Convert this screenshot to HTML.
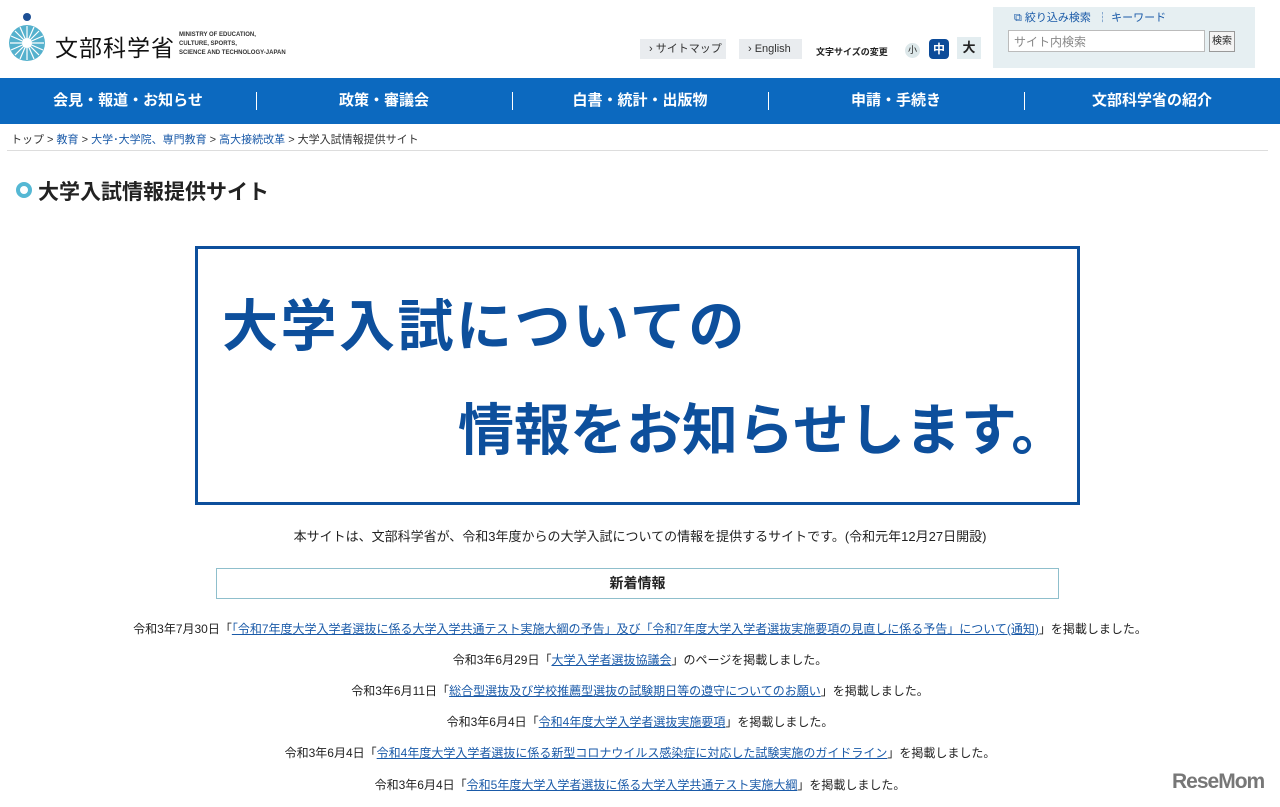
<!DOCTYPE html>
<html><head><meta charset="utf-8"><style>
body{margin:0;width:1280px;height:807px;overflow:hidden;background:#fff;font-family:"Liberation Sans","Noto Sans CJK JP",sans-serif;color:#222;position:relative}
.a{position:absolute;white-space:nowrap}
a{color:#1a5aa8;text-decoration:underline}
.nav{position:absolute;left:0;top:78px;width:1280px;height:46px;background:#0c69bf;display:flex}
.nav div{flex:1;color:#fff;font-weight:bold;font-size:15px;text-align:center;line-height:46px;position:relative}
.nav div+div:before{content:"";position:absolute;left:0;top:14px;height:18px;border-left:1px solid #fff}
.news{position:absolute;left:0;width:1280px;text-align:center;font-size:12px;color:#222;white-space:nowrap}
.btn{position:absolute;top:39px;height:20px;background:#e9ecef;font-size:11px;line-height:20px;color:#333;padding:0 9px;white-space:nowrap}
</style></head><body>
<svg class="a" style="left:7px;top:12px" width="40" height="52" viewBox="0 0 40 52">
<circle cx="20" cy="5" r="4" fill="#1d4f95"/>
<circle cx="20" cy="31" r="18" fill="#55b1cd"/>
<g stroke="#fff" stroke-width="1.2"><line x1="20" y1="14" x2="20" y2="48"/><line x1="3" y1="31" x2="37" y2="31"/><line x1="8" y1="19" x2="32" y2="43"/><line x1="32" y1="19" x2="8" y2="43"/><line x1="13" y1="15" x2="27" y2="47"/><line x1="27" y1="15" x2="13" y2="47"/><line x1="4" y1="24" x2="36" y2="38"/><line x1="4" y1="38" x2="36" y2="24"/></g>
<circle cx="20" cy="31" r="5" fill="#fff"/></svg>
<div class="a" style="left:55px;top:29px;font-size:23px;letter-spacing:1px;color:#111">文部科学省</div>
<div class="a" style="left:179px;top:31px;font-size:6px;line-height:9px;font-weight:bold;color:#333">MINISTRY OF EDUCATION,<br>CULTURE, SPORTS,<br>SCIENCE AND TECHNOLOGY-JAPAN</div>
<div class="btn" style="left:640px;width:68px">› サイトマップ</div>
<div class="btn" style="left:739px;width:45px">› English</div>
<div class="a" style="left:816px;top:45px;font-size:9px;font-weight:bold">文字サイズの変更</div>
<div class="a" style="left:905px;top:43px;width:15px;height:15px;border-radius:50%;background:#dde8ea;font-size:9px;text-align:center;line-height:15px">小</div>
<div class="a" style="left:929px;top:39px;width:20px;height:20px;border-radius:4px;background:#0c4b99;color:#fff;font-weight:bold;font-size:12px;text-align:center;line-height:20px">中</div>
<div class="a" style="left:957px;top:37px;width:24px;height:22px;background:#e3edf0;font-weight:bold;font-size:13px;text-align:center;line-height:22px">大</div>
<div class="a" style="left:993px;top:7px;width:262px;height:61px;background:#e6eff2"></div>
<div class="a" style="left:1014px;top:9px;font-size:11px;color:#1a5aa8">⧉ 絞り込み検索 &nbsp;┆ キーワード</div>
<div class="a" style="left:1008px;top:30px;height:22px;background:#fff;border:1px solid #bbb;font-size:12px;color:#888;line-height:22px;padding-left:5px;box-sizing:border-box;width:197px">サイト内検索</div>
<div class="a" style="left:1209px;top:31px;width:26px;height:21px;background:#f4f4f4;border:1px solid #999;font-size:10px;text-align:center;line-height:20px;box-sizing:border-box">検索</div>
<div class="nav"><div>会見・報道・お知らせ</div><div>政策・審議会</div><div>白書・統計・出版物</div><div>申請・手続き</div><div>文部科学省の紹介</div></div>
<div class="a" style="left:11px;top:131px;font-size:11px;color:#333">トップ &gt; <span style="color:#1a5aa8">教育</span> &gt; <span style="color:#1a5aa8">大学･大学院、専門教育</span> &gt; <span style="color:#1a5aa8">高大接続改革</span> &gt; 大学入試情報提供サイト</div>
<div class="a" style="left:7px;top:150px;width:1261px;border-top:1px solid #ddd"></div>
<div class="a" style="left:16px;top:182px;width:8px;height:8px;border:4px solid #55b8d4;border-radius:50%;background:#fff"></div>
<div class="a" style="left:38px;top:176px;font-size:21px;font-weight:bold;color:#222">大学入試情報提供サイト</div>
<div class="a" style="left:195px;top:246px;width:885px;height:259px;border:3px solid #0d4f9c;box-sizing:border-box"></div>
<div class="a" style="left:222px;top:282px;font-size:56px;font-weight:bold;color:#0d4f9c;letter-spacing:2.5px">大学入試についての</div>
<div class="a" style="left:458px;top:386px;font-size:56px;font-weight:bold;color:#0d4f9c;letter-spacing:0">情報をお知らせします。</div>
<div class="news" style="top:526px;font-size:13px">本サイトは、文部科学省が、令和3年度からの大学入試についての情報を提供するサイトです。(令和元年12月27日開設)</div>
<div class="a" style="left:216px;top:568px;width:843px;height:31px;border:1px solid #8fbfcc;box-sizing:border-box;text-align:center;font-size:14px;font-weight:bold;line-height:29px">新着情報</div>
<div class="news" style="top:620px">令和3年7月30日「<a>「令和7年度大学入学者選抜に係る大学入学共通テスト実施大綱の予告」及び「令和7年度大学入学者選抜実施要項の見直しに係る予告」について(通知)</a>」を掲載しました。</div>
<div class="news" style="top:651px">令和3年6月29日「<a>大学入学者選抜協議会</a>」のページを掲載しました。</div>
<div class="news" style="top:682px">令和3年6月11日「<a>総合型選抜及び学校推薦型選抜の試験期日等の遵守についてのお願い</a>」を掲載しました。</div>
<div class="news" style="top:713px">令和3年6月4日「<a>令和4年度大学入学者選抜実施要項</a>」を掲載しました。</div>
<div class="news" style="top:744px">令和3年6月4日「<a>令和4年度大学入学者選抜に係る新型コロナウイルス感染症に対応した試験実施のガイドライン</a>」を掲載しました。</div>
<div class="news" style="top:776px">令和3年6月4日「<a>令和5年度大学入学者選抜に係る大学入学共通テスト実施大綱</a>」を掲載しました。</div>
<div class="a" style="left:1172px;top:770px;font-size:21px;font-weight:bold;color:#777;letter-spacing:-1px">ReseMom</div>
</body></html>
